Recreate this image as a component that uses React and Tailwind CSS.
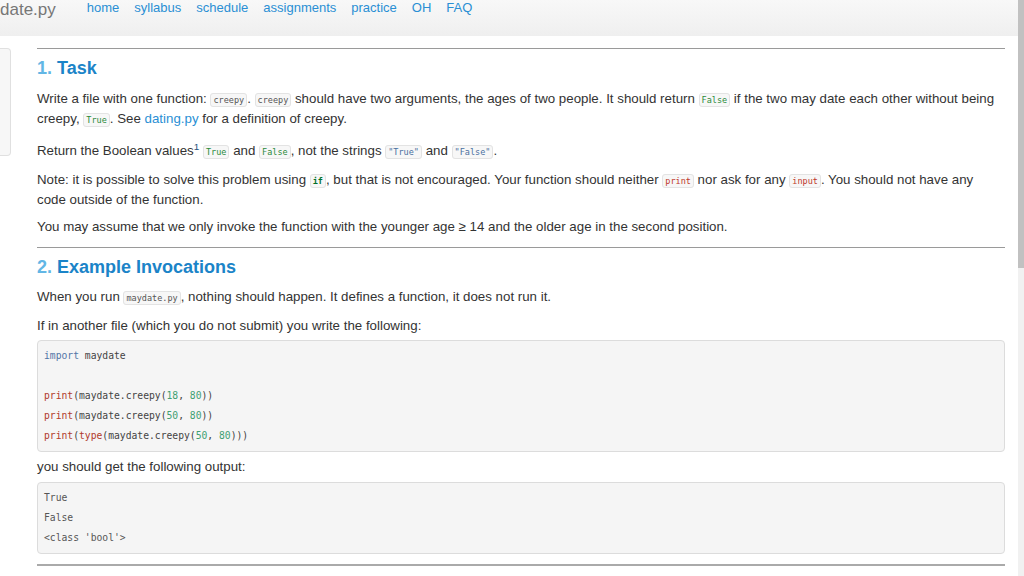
import React from "react";

const Code = ({ children, cls = "text-[#555]" }) => (
  <code
    className={`font-['DejaVu_Sans_Mono',monospace] text-[8.5px] leading-none bg-[#f7f7f7] border border-[#e3e3e3] rounded-[3px] px-[2px] py-[1px] ${cls}`}
  >
    {children}
  </code>
);

const Kw = ({ children }) => <span className="text-[#b13a2b]">{children}</span>;
const Num = ({ children }) => <span className="text-[#3f9f72]">{children}</span>;

const NavLinks = ["home", "syllabus", "schedule", "assignments", "practice", "OH", "FAQ"];

const App = () => {
  return (
    <div className="flex h-screen overflow-hidden bg-white font-['Liberation_Sans',Arial,sans-serif] text-[#333]">
      <div className="flex-1 min-w-0">
        <header className="h-[36px] flex items-start bg-gradient-to-b from-[#f8f8f8] to-[#efefef]">
          <div className="mt-[-1px] text-[17px] leading-[22px] text-[#777]">date.py</div>
          <nav className="ml-[31px] flex gap-[15px] text-[13px] leading-[16px] text-[#2a8fd4]">
            {NavLinks.map((l) => (
              <a key={l} href="#">
                {l}
              </a>
            ))}
          </nav>
        </header>

        <div className="flex pt-[12px]">
          <aside className="w-[11px] h-[108px] shrink-0 bg-[#f7f7f7] border border-l-0 border-[#e0e0e0] rounded-r-[4px]" />

          <main className="ml-[26px] w-[968px] text-[13.3px] leading-[20px]">
            <hr className="border-0 h-px bg-[#9a9a9a]" />

            <h2 className="mt-[9px] text-[18px] leading-[20px] font-bold text-[#1b84c8]">
              <span className="text-[#62b6e5]">1. </span>Task
            </h2>

            <p className="mt-[11px]">
              Write a file with one function: <Code>creepy</Code>. <Code>creepy</Code> should have two arguments, the
              ages of two people. It should return <Code cls="text-[#2a8a3a]">False</Code> if the two may date each
              other without being creepy, <Code cls="text-[#2a8a3a]">True</Code>. See{" "}
              <a href="#" className="text-[#2a8fd4]">
                dating.py
              </a>{" "}
              for a definition of creepy.
            </p>

            <p className="mt-[12px]">
              Return the Boolean values<sup className="text-[#23527c]">1</sup>{" "}
              <Code cls="text-[#2a8a3a]">True</Code> and <Code cls="text-[#2a8a3a]">False</Code>, not the strings{" "}
              <Code cls="text-[#4a70a0]">"True"</Code> and <Code cls="text-[#4a70a0]">"False"</Code>.
            </p>

            <p className="mt-[9px]">
              Note: it is possible to solve this problem using <Code cls="text-[#00702a] font-bold">if</Code>, but that
              is not encouraged. Your function should neither <Code cls="text-[#c0392b]">print</Code> nor ask for any{" "}
              <Code cls="text-[#c0392b]">input</Code>. You should not have any code outside of the function.
            </p>

            <p className="mt-[7px]">
              You may assume that we only invoke the function with the younger age ≥ 14 and the older age in the second
              position.
            </p>

            <hr className="mt-[10px] border-0 h-px bg-[#9a9a9a]" />

            <h2 className="mt-[9px] text-[18px] leading-[20px] font-bold text-[#1b84c8]">
              <span className="text-[#62b6e5]">2. </span>Example Invocations
            </h2>

            <p className="mt-[10px]">
              When you run <Code>maydate.py</Code>, nothing should happen. It defines a function, it does not run it.
            </p>

            <p className="mt-[9px]">If in another file (which you do not submit) you write the following:</p>

            <pre className="mt-[4px] px-[6px] py-[5px] bg-[#f5f5f5] border border-[#dcdcdc] rounded-[4px] font-['DejaVu_Sans_Mono',monospace] text-[9.7px] leading-[20px] text-[#444]">
              <div>
                <span className="text-[#5274a6]">import</span> maydate
              </div>
              <div>&nbsp;</div>
              <div>
                <Kw>print</Kw>(maydate.creepy(<Num>18</Num>, <Num>80</Num>))
              </div>
              <div>
                <Kw>print</Kw>(maydate.creepy(<Num>50</Num>, <Num>80</Num>))
              </div>
              <div>
                <Kw>print</Kw>(<Kw>type</Kw>(maydate.creepy(<Num>50</Num>, <Num>80</Num>)))
              </div>
            </pre>

            <p className="mt-[5px]">you should get the following output:</p>

            <pre className="mt-[5px] px-[6px] py-[5px] bg-[#f5f5f5] border border-[#dcdcdc] rounded-[4px] font-['DejaVu_Sans_Mono',monospace] text-[9.7px] leading-[20px] text-[#555]">
              <div>True</div>
              <div>False</div>
              <div>{"<class 'bool'>"}</div>
            </pre>

            <hr className="mt-[10px] border-0 h-[2px] bg-[#aaaaaa]" />
          </main>
        </div>
      </div>

      <div className="w-[6px] shrink-0 flex flex-col bg-[#f1f1f1]">
        <div className="h-[268px] bg-[#c1c1c1]" />
      </div>
    </div>
  );
};

export default App;
